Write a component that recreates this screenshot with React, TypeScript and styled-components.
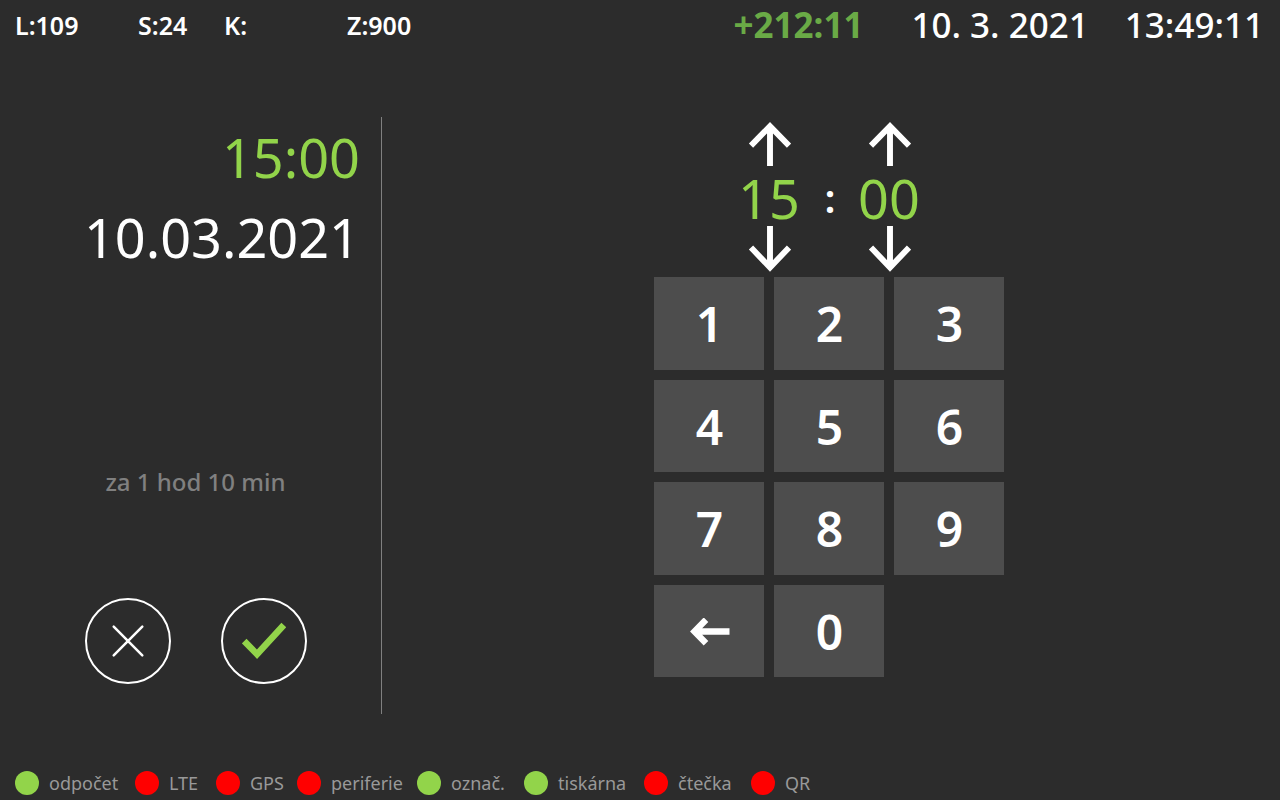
import React, { useState } from "react";
import styled, { createGlobalStyle } from "styled-components";

const GlobalStyle = createGlobalStyle`
  * {
    box-sizing: border-box;
  }

  body {
    margin: 0;
    background: #2c2c2c;
    color: #ffffff;
    font-family: "Noto Sans", "Open Sans", sans-serif;
  }

  button {
    font: inherit;
    color: inherit;
    cursor: pointer;
  }
`;

const Screen = styled.div`
  min-height: 100vh;
  display: flex;
  flex-direction: column;
`;

const Header = styled.header`
  display: flex;
  align-items: center;
  justify-content: space-between;
  height: 50px;
  padding: 0 16px 0 15px;
  white-space: nowrap;
`;

const RouteInfo = styled.div`
  display: grid;
  grid-template-columns: 123px 86px 123px auto;
  font-size: 25px;
  font-weight: 600;
  line-height: 32px;
`;

const Clock = styled.div`
  display: flex;
  gap: 36px;
  font-size: 35px;
  font-weight: 500;
  line-height: 48px;
`;

const Deviation = styled.span`
  margin-right: 12px;
  color: #6aaa46;
  font-weight: 700;
`;

const Main = styled.main`
  flex: 1;
  display: flex;
  padding: 67px 0 55px;
`;

const Summary = styled.section`
  width: 382px;
  flex: none;
  display: flex;
  flex-direction: column;
  padding-bottom: 30px;
  border-right: 1px solid #808080;
`;

const BigValue = styled.div<{ $accent?: boolean }>`
  padding-right: 21px;
  color: ${(p) => (p.$accent ? "#92d44a" : "#ffffff")};
  font-size: 54px;
  line-height: 80px;
  text-align: right;
`;

const Remaining = styled.p`
  flex: 1;
  display: flex;
  align-items: center;
  justify-content: center;
  margin: 0;
  padding: 138px 0 0 10px;
  color: #808080;
  font-size: 24px;
  font-weight: 500;
  line-height: 32px;
`;

const Actions = styled.div`
  display: flex;
  justify-content: center;
  gap: 50px;
  padding: 50px 0 0 11px;
`;

const RoundButton = styled.button`
  display: grid;
  place-items: center;
  width: 86px;
  height: 86px;
  padding: 0;
  border: 2px solid #ffffff;
  border-radius: 50%;
  background: none;
`;

const Entry = styled.section`
  flex: 1;
  display: flex;
  flex-direction: column;
  align-items: center;
  padding-right: 4px;
`;

const TimePicker = styled.div`
  display: grid;
  grid-template-columns: repeat(3, 60px);
  align-items: center;
  justify-items: center;
  height: 160px;
  padding-bottom: 2px;
`;

const Spinner = styled.div`
  display: flex;
  flex-direction: column;
  align-items: center;
`;

const StepButton = styled.button`
  display: block;
  padding: 0;
  border: 0;
  background: none;

  svg {
    display: block;
  }
`;

const SpinnerValue = styled.span`
  padding-top: 4px;
  color: #92d44a;
  font-size: 54px;
  line-height: 56px;
`;

const Colon = styled.span`
  padding: 4px 0 0 2px;
  font-size: 40px;
  font-weight: 600;
  line-height: 48px;
`;

const Keypad = styled.div`
  display: grid;
  grid-template-columns: repeat(3, 110px);
  grid-template-rows: repeat(4, 1fr);
  gap: 10px;
  height: 400px;
`;

const Key = styled.button`
  display: grid;
  place-items: center;
  padding: 2px 0 0 1px;
  border: 0;
  background: #4d4d4d;
  font-size: 48px;
  font-weight: 600;
  line-height: 64px;
`;

const StatusBar = styled.footer`
  display: grid;
  grid-template-columns: 120px 81px 81px 120px 107px 120px 107px auto;
  justify-content: start;
  padding: 0 15px 4px;
`;

const Status = styled.div`
  display: flex;
  align-items: center;
  gap: 10px;
  height: 27px;
  color: #999999;
  font-size: 18px;
  line-height: 25px;
  white-space: nowrap;
`;

const StatusLabel = styled.span`
  padding-top: 2px;
`;

const Dot = styled.span<{ $ok: boolean }>`
  width: 24px;
  height: 24px;
  flex: none;
  border-radius: 50%;
  background: ${(p) => (p.$ok ? "#92d44a" : "#ff0000")};
`;

const statuses = [
  { label: "odpočet", ok: true },
  { label: "LTE", ok: false },
  { label: "GPS", ok: false },
  { label: "periferie", ok: false },
  { label: "označ.", ok: true },
  { label: "tiskárna", ok: true },
  { label: "čtečka", ok: false },
  { label: "QR", ok: false },
];

const pad = (n: number) => String(n).padStart(2, "0");

const ArrowUp = () => (
  <svg width="44" height="46" viewBox="0 0 44 46" fill="none" stroke="#fff" strokeWidth="5.9">
    <path d="M23 46V6.2M4 25.6 23 6.2l19 19.4" />
  </svg>
);

const ArrowDown = () => (
  <svg width="44" height="46" viewBox="0 0 44 46" fill="none" stroke="#fff" strokeWidth="5.9">
    <path d="M23 0V41.5M4 21.5 23 41.5l19-20" />
  </svg>
);

const Backspace = () => (
  <svg width="40" height="28" viewBox="0 0 40 28" fill="none" stroke="#fff" strokeWidth="6.4">
    <path d="M39.5 13.5H6M16 1.7 4.5 13.5 16 25.3" />
  </svg>
);

function TimeSpinner(props: {
  label: string;
  value: number;
  modulo: number;
  onChange: (n: number) => void;
}) {
  const step = (d: number) => props.onChange((props.value + d + props.modulo) % props.modulo);
  return (
    <Spinner role="group" aria-label={props.label}>
      <StepButton type="button" aria-label={`${props.label} +`} onClick={() => step(1)}>
        <ArrowUp />
      </StepButton>
      <SpinnerValue>{pad(props.value)}</SpinnerValue>
      <StepButton type="button" aria-label={`${props.label} −`} onClick={() => step(-1)}>
        <ArrowDown />
      </StepButton>
    </Spinner>
  );
}

export default function App() {
  const [hours, setHours] = useState(15);
  const [minutes, setMinutes] = useState(0);

  return (
    <Screen>
      <GlobalStyle />
      <Header>
        <RouteInfo>
          <span>L:109</span>
          <span>S:24</span>
          <span>K:</span>
          <span>Z:900</span>
        </RouteInfo>
        <Clock>
          <Deviation>+212:11</Deviation>
          <span>10. 3. 2021</span>
          <span>13:49:11</span>
        </Clock>
      </Header>
      <Main>
        <Summary>
          <BigValue $accent>
            {pad(hours)}:{pad(minutes)}
          </BigValue>
          <BigValue>10.03.2021</BigValue>
          <Remaining>za 1 hod 10 min</Remaining>
          <Actions>
            <RoundButton type="button" aria-label="Zrušit">
              <svg width="34" height="34" viewBox="0 0 34 34" fill="none" stroke="#fff" strokeWidth="2.5" strokeLinecap="round">
                <path d="M2.7 2.7 31.3 31.3M31.3 2.7 2.7 31.3" />
              </svg>
            </RoundButton>
            <RoundButton type="button" aria-label="Potvrdit">
              <svg width="44" height="38" viewBox="0 0 44 38" fill="none" stroke="#92d44a" strokeWidth="6.5">
                <path d="M2.2 19 15 32.2 41.8 3" />
              </svg>
            </RoundButton>
          </Actions>
        </Summary>
        <Entry>
          <TimePicker>
            <TimeSpinner label="Hodiny" value={hours} modulo={24} onChange={setHours} />
            <Colon>:</Colon>
            <TimeSpinner label="Minuty" value={minutes} modulo={60} onChange={setMinutes} />
          </TimePicker>
          <Keypad>
            {["1", "2", "3", "4", "5", "6", "7", "8", "9"].map((n) => (
              <Key key={n} type="button">
                {n}
              </Key>
            ))}
            <Key type="button" aria-label="Smazat">
              <Backspace />
            </Key>
            <Key type="button">0</Key>
          </Keypad>
        </Entry>
      </Main>
      <StatusBar>
        {statuses.map((s) => (
          <Status key={s.label}>
            <Dot $ok={s.ok} />
            <StatusLabel>{s.label}</StatusLabel>
          </Status>
        ))}
      </StatusBar>
    </Screen>
  );
}
